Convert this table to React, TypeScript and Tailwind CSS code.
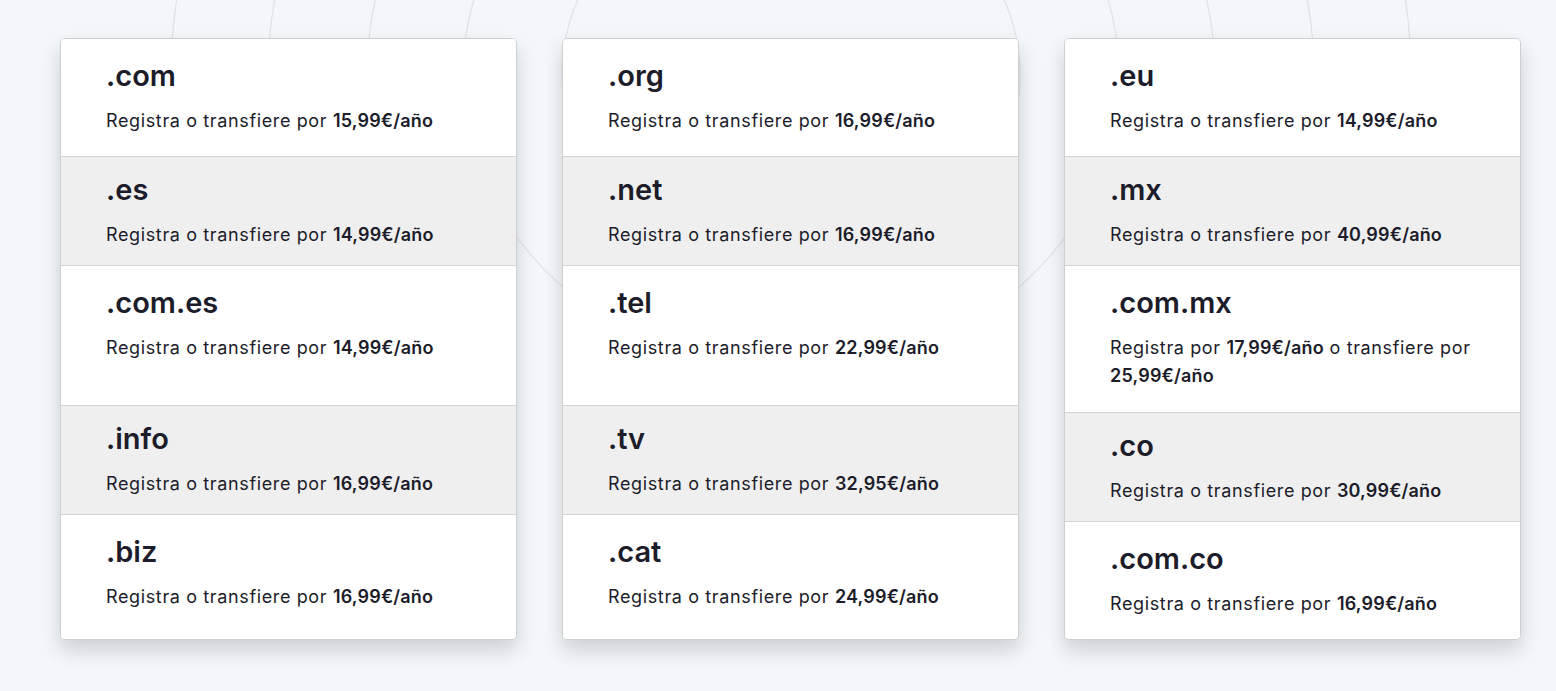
import React from 'react';

type Row = {
  tld: string;
  price?: string;
  custom?: React.ReactNode;
  h: string;
  grey?: boolean;
};

const columns: Row[][] = [
  [
    { tld: '.com', price: '15,99€/año', h: 'h-[118px]' },
    { tld: '.es', price: '14,99€/año', h: 'h-[109px]', grey: true },
    { tld: '.com.es', price: '14,99€/año', h: 'h-[140px]' },
    { tld: '.info', price: '16,99€/año', h: 'h-[109px]', grey: true },
    { tld: '.biz', price: '16,99€/año', h: 'flex-1' },
  ],
  [
    { tld: '.org', price: '16,99€/año', h: 'h-[118px]' },
    { tld: '.net', price: '16,99€/año', h: 'h-[109px]', grey: true },
    { tld: '.tel', price: '22,99€/año', h: 'h-[140px]' },
    { tld: '.tv', price: '32,95€/año', h: 'h-[109px]', grey: true },
    { tld: '.cat', price: '24,99€/año', h: 'flex-1' },
  ],
  [
    { tld: '.eu', price: '14,99€/año', h: 'h-[118px]' },
    { tld: '.mx', price: '40,99€/año', h: 'h-[109px]', grey: true },
    {
      tld: '.com.mx',
      h: 'h-[147px]',
      custom: (
        <>
          Registra por <span className="font-semibold tracking-[0.01em]">17,99€/año</span> o transfiere por
          <br />
          <span className="font-semibold tracking-[0.01em]">25,99€/año</span>
        </>
      ),
    },
    { tld: '.co', price: '30,99€/año', h: 'h-[109px]', grey: true },
    { tld: '.com.co', price: '16,99€/año', h: 'flex-1' },
  ],
];

// faint globe rings behind the cards
const rings = [229, 328, 424, 523, 620];

const Backdrop = () => (
  <svg className="absolute inset-0 w-full h-full pointer-events-none" viewBox="0 0 1556 691" preserveAspectRatio="none">
    <defs>
      <linearGradient id="fade" x1="0" y1="0" x2="0" y2="691" gradientUnits="userSpaceOnUse">
        <stop offset="0" stopColor="#dfe3e8" stopOpacity="1" />
        <stop offset="0.42" stopColor="#dfe3e8" stopOpacity="0.9" />
        <stop offset="0.5" stopColor="#dfe3e8" stopOpacity="0" />
      </linearGradient>
    </defs>
    {rings.map((r) => (
      <ellipse key={r} cx="791" cy="75" rx={r} ry={r * 0.9} fill="none" stroke="url(#fade)" strokeWidth="1.3" />
    ))}
  </svg>
);

const DomainRow = ({ row, last }: { row: Row; last: boolean }) => (
  <div
    className={`${row.h} ${row.grey ? 'bg-[#efefef] pt-[16px]' : 'bg-white pt-[20px]'} ${
      last ? '' : 'border-b border-[#d4d4d4]'
    } pl-[45px] pr-[30px] flex flex-col`}
  >
    <div className="text-[29px] leading-[34px] font-semibold text-[#1c1c2a]">{row.tld}</div>
    <p className="mt-[14px] text-[18px] leading-[28px] text-[#1c1c2a] tracking-[0.035em] whitespace-nowrap">
      {row.custom ?? (
        <>
          Registra o transfiere por <span className="font-semibold tracking-[0.01em]">{row.price}</span>
        </>
      )}
    </p>
  </div>
);

export default function App() {
  return (
    <div className="relative min-h-[691px] bg-[#f4f7fa] overflow-hidden font-['Inter','Noto_Sans',sans-serif]">
      <Backdrop />
      <div className="relative grid grid-cols-3 gap-x-[45px] pl-[60px] pr-[35px] pt-[38px]">
        {columns.map((col, i) => (
          <div
            key={i}
            className="h-[602px] flex flex-col bg-white border border-[#cfcfcf] rounded-[5px] overflow-hidden shadow-[0_10px_20px_rgba(0,0,0,0.16)]"
          >
            {col.map((row, j) => (
              <DomainRow key={row.tld} row={row} last={j === col.length - 1} />
            ))}
          </div>
        ))}
      </div>
    </div>
  );
}
